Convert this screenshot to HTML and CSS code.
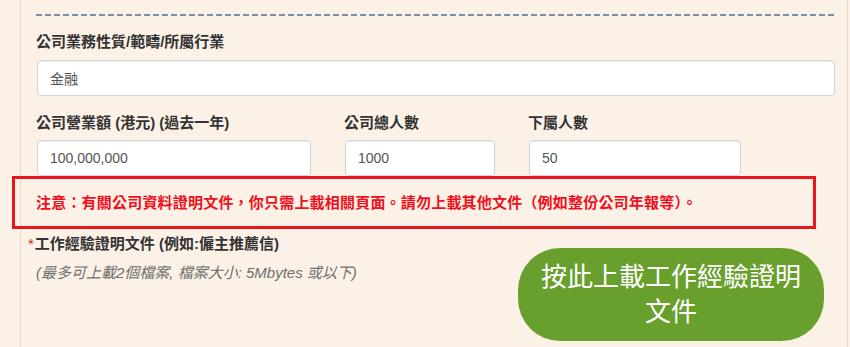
FILE: index.html
```html
<!DOCTYPE html>
<html lang="zh-Hant">
  <head>
    <meta charset="UTF-8" />
    <meta name="viewport" content="width=device-width, initial-scale=1.0" />
    <title>公司資料</title>
    <link rel="stylesheet" href="styles.css">
  </head>
  <body>
    <div class="panel">
      <div class="divider"></div>

      <div class="field">
        <label class="label">公司業務性質/範疇/所屬行業</label>
        <input class="input" type="text" value="金融" />
      </div>

      <div class="field-row">
        <div class="field">
          <label class="label">公司營業額 (港元) (過去一年)</label>
          <input class="input" type="text" value="100,000,000" />
        </div>
        <div class="field">
          <label class="label">公司總人數</label>
          <input class="input" type="text" value="1000" />
        </div>
        <div class="field">
          <label class="label">下屬人數</label>
          <input class="input" type="text" value="50" />
        </div>
      </div>

      <div class="notice">注意：有關公司資料證明文件，你只需上載相關頁面。請勿上載其他文件（例如整份公司年報等）。</div>

      <div class="upload">
        <div class="upload-info">
          <div class="label"><span class="req">*</span>工作經驗證明文件 (例如:僱主推薦信)</div>
          <div class="hint">(最多可上載2個檔案, 檔案大小: 5Mbytes 或以下)</div>
        </div>
        <button class="upload-btn" type="button">按此上載工作經驗證明文件</button>
      </div>
    </div>
  </body>
</html>
```

FILE: styles.css
```css
* {
  box-sizing: border-box;
}

html,
body {
  margin: 0;
  padding: 0;
  background-color: #fcf1e6;
}

body {
  height: 347px;
  overflow: hidden;
  font-family: "Liberation Sans", "Noto Sans CJK TC", sans-serif;
  color: #333;
}

.panel {
  margin: 0 2px 0 20px;
  height: 347px;
  padding: 14px 13px 0 15px;
  border-left: 1px solid #e8d9c8;
  border-right: 1px solid #e8d9c8;
}

.divider {
  height: 2px;
  background: repeating-linear-gradient(to right, #7891ab 0 6px, transparent 6px 9px);
}

.label {
  display: block;
  font-size: 15px;
  line-height: 20px;
  font-weight: bold;
  color: #333;
}

.field > .label {
  margin: 16px 0 8px;
}

.input {
  display: block;
  width: 100%;
  height: 36px;
  margin-left: 1px;
  padding: 0 12px;
  border: 1px solid #d2d2d2;
  border-radius: 4px;
  background: #fff;
  box-shadow: inset 0 1px 1px rgba(0, 0, 0, 0.06);
  font-family: inherit;
  font-size: 14px;
  color: #555;
}

.field-row {
  display: grid;
  grid-template-columns: 274px 150px 212px;
  column-gap: 34px;
}

.field-row .field > .label {
  margin: 17px 0 7px;
}

.notice {
  position: relative;
  margin-left: -24px;
  width: 804px;
  height: 53px;
  padding-left: 21px;
  border: 3px solid #e8151c;
  font-size: 15px;
  line-height: 47px;
  font-weight: bold;
  letter-spacing: 0.2px;
  color: #f0101c;
  white-space: nowrap;
}

.upload {
  display: flex;
  justify-content: space-between;
  align-items: flex-start;
  margin-top: 5px;
}

.req {
  color: #e0222a;
  margin-left: -8px;
  margin-right: 1px;
  font-weight: normal;
}

.hint {
  margin-top: 9px;
  font-size: 15px;
  line-height: 20px;
  font-style: italic;
  color: #6f6f6f;
}

.upload-btn {
  margin: 14px 10px 0 0;
  width: 306px;
  height: 93px;
  padding: 0 20px;
  border: none;
  border-radius: 42px;
  background-color: #69a02d;
  color: #fff;
  font-family: inherit;
  font-size: 26px;
  line-height: 35px;
  text-align: center;
}
```
